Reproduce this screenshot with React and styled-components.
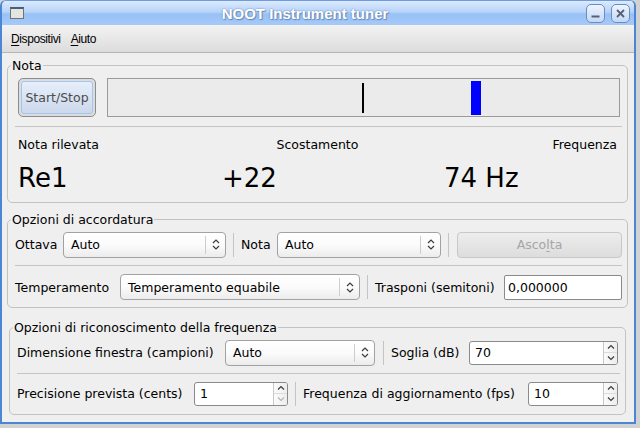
import styled, { createGlobalStyle } from "styled-components";

const GlobalStyle = createGlobalStyle`
  html, body { margin: 0; padding: 0; background: #d2d2d2; }
  body { font-family: "DejaVu Sans", "Noto Sans", sans-serif; font-size: 12.5px; color: #000; }
  * { box-sizing: border-box; }
`;

// finestra
const Window = styled.div`
  width: 636px;
  height: 424px;
  display: flex;
  flex-direction: column;
  background: #efefef;
  border: 2px solid #4a85d6;
  border-top: 1px solid #6d9de0;
  border-radius: 6px 6px 0 0;
  overflow: hidden;
`;

const TitleBar = styled.div`
  height: 24px;
  display: flex;
  align-items: center;
  padding: 0 4px 0 8px;
  background: linear-gradient(to bottom, #dceafd 0%, #b8d4fa 45%, #98c1f7 55%, #a6caf8 100%);
`;

const AppIcon = styled.div`
  width: 14px;
  height: 12px;
  border: 1px solid #6f7478;
  border-top: 2px solid #4c5d78;
  background: #e4e5df;
`;

const Title = styled.div`
  flex: 1;
  text-align: center;
  font-family: "Liberation Sans", Arial, sans-serif;
  font-weight: bold;
  font-size: 15px;
  color: #fff;
  text-shadow: 0 0 2px #5f7fae, 1px 1px 1px #6f8cb8;
`;

const WinButtons = styled.div`
  display: flex;
  gap: 6px;
`;

const WinButton = styled.div`
  width: 19px;
  height: 19px;
  border: 1px solid #6d8cbb;
  border-radius: 5px;
  background: linear-gradient(to bottom, #eef4fd, #c3d8f6);
  display: flex;
  align-items: center;
  justify-content: center;
`;

const MenuBar = styled.div`
  height: 28px;
  display: flex;
  align-items: center;
  gap: 10px;
  padding-left: 9px;
  background: linear-gradient(to bottom, #f3f3f3, #dcdcdc);
  border-bottom: 1px solid #b6b6b6;
  font-family: "Liberation Sans", Arial, sans-serif;
  font-size: 12px;
  letter-spacing: -0.4px;
`;

const Mnemonic = styled.span`
  text-decoration: underline;
  text-underline-offset: 2px;
`;

const Content = styled.div`
  display: flex;
  flex-direction: column;
  padding: 0 6px 0 5px;
`;

// gruppi
const Group = styled.fieldset`
  margin: ${(p) => p.$top}px ${(p) => p.$inset}px 0 ${(p) => p.$inset}px;
  padding: 0;
  border: 1px solid #c2c2c2;
  border-radius: 5px;
  min-width: 0;
`;

const Legend = styled.legend`
  margin-left: 3px;
  padding: 0 1px;
  line-height: 15px;
`;

const GroupBody = styled.div`
  display: flex;
  flex-direction: column;
  padding: ${(p) => p.$pad};
`;

const Row = styled.div`
  display: flex;
  align-items: center;
  height: ${(p) => p.$h || 26}px;
  margin-top: ${(p) => p.$mt || 0}px;
  padding-right: ${(p) => p.$pr || 0}px;
`;

const HLine = styled.div`
  height: 1px;
  background: #c4c4c4;
  margin-top: ${(p) => p.$mt}px;
`;

const VLine = styled.div`
  width: 1px;
  height: 24px;
  background: #c4c4c4;
  margin: 0 ${(p) => p.$r || 7}px 0 ${(p) => p.$l || 7}px;
`;

// larghezza fissa come nel layout Qt (testo + spazio)
const Label = styled.span`
  white-space: nowrap;
  flex: none;
  width: ${(p) => p.$w}px;
`;

// nota
const TopRow = styled.div`
  display: flex;
  height: 39px;
  gap: 11px;
  margin: 0 2px 0 3px;
`;

const StartButton = styled.div`
  width: 78px;
  border: 1px solid #8c8c8c;
  border-radius: 5px;
  padding: 2px;
  background: #dcdcdc;
  display: flex;
`;

const StartInner = styled.div`
  flex: 1;
  border: 1px solid #a3c6f0;
  border-radius: 3px;
  background: linear-gradient(to bottom, #e6eefa, #ccd9ec);
  display: flex;
  align-items: center;
  justify-content: center;
  color: #4c4c4c;
`;

const Meter = styled.div`
  flex: 1;
  position: relative;
  border: 1px solid #9a9a9a;
  background: #ebebeb;
`;

const Mark = styled.div`
  position: absolute;
  left: ${(p) => p.$x}px;
  top: ${(p) => p.$y}px;
  width: ${(p) => p.$w}px;
  height: ${(p) => p.$h}px;
  background: ${(p) => p.$c};
`;

const Readings = styled.div`
  display: grid;
  grid-template-columns: 1fr 1fr 1fr;
  line-height: 15px;
  margin: 9.5px 5px 0 3px;
`;

const Reading = styled.div`
  text-align: ${(p) => p.$align};
`;

const Values = styled.div`
  display: grid;
  grid-template-columns: 204px 222px 1fr;
  font-size: 26px;
  line-height: 30px;
  margin: 11.5px 0 0 3px;
`;

// controlli
const Combo = styled.div`
  width: ${(p) => p.$w}px;
  height: 26px;
  display: flex;
  align-items: center;
  border: 1px solid #a2a2a2;
  border-radius: 4px;
  background: linear-gradient(to bottom, #ffffff 0%, #fbfbfb 50%, #ececec 100%);
  padding-left: 7px;
`;

const ComboText = styled.span`
  flex: 1;
  white-space: nowrap;
`;

const ComboArrows = styled.div`
  width: 20px;
  height: 18px;
  border-left: 1px solid #cdcdcd;
  display: flex;
  align-items: center;
  justify-content: center;
`;

const Spin = styled.div`
  width: ${(p) => (p.$w ? `${p.$w}px` : "auto")};
  flex: ${(p) => (p.$w ? "none" : 1)};
  height: 24px;
  display: flex;
  border: 1px solid #8a8a8a;
  border-radius: 3px;
  background: #fff;
`;

const SpinText = styled.span`
  flex: 1;
  padding-left: 5px;
  line-height: 22px;
`;

const SpinButtons = styled.div`
  width: 14px;
  display: flex;
  flex-direction: column;
  border-left: 1px solid #c8c8c8;
  background: linear-gradient(to right, #fbfbfb, #ededed);
  border-radius: 0 2px 2px 0;
`;

const SpinHalf = styled.div`
  flex: 1;
  display: flex;
  align-items: center;
  justify-content: center;
  & + & { border-top: 1px solid #dcdcdc; }
`;

const TextInput = styled.div`
  flex: 1;
  height: 25px;
  border: 1px solid #8a8a8a;
  border-radius: 2px;
  background: #fff;
  padding-left: 3px;
  line-height: 23px;
`;

const ListenButton = styled.div`
  flex: 1;
  height: 26px;
  border: 1px solid #c8c8c8;
  border-radius: 4px;
  background: linear-gradient(to bottom, #ededed, #dddddd);
  color: #a6a6a6;
  display: flex;
  align-items: center;
  justify-content: center;
`;

const UpDown = () => (
  <svg width="8" height="13" viewBox="0 0 8 13">
    <path d="M1 5 L4 2 L7 5" fill="none" stroke="#3c3c3c" strokeWidth="1.2" />
    <path d="M1 8 L4 11 L7 8" fill="none" stroke="#3c3c3c" strokeWidth="1.2" />
  </svg>
);

const Chevron = ({ down, dim }) => (
  <svg width="8" height="6" viewBox="0 0 8 6">
    <path
      d={down ? "M1 1.5 L4 4.5 L7 1.5" : "M1 4.5 L4 1.5 L7 4.5"}
      fill="none"
      stroke={dim ? "#b4b4b4" : "#3c3c3c"}
      strokeWidth="1.2"
    />
  </svg>
);

const SelectBox = ({ w, value }) => (
  <Combo $w={w}>
    <ComboText>{value}</ComboText>
    <ComboArrows>
      <UpDown />
    </ComboArrows>
  </Combo>
);

const SpinBox = ({ w, value, atMin }) => (
  <Spin $w={w}>
    <SpinText>{value}</SpinText>
    <SpinButtons>
      <SpinHalf>
        <Chevron />
      </SpinHalf>
      <SpinHalf>
        <Chevron down dim={atMin} />
      </SpinHalf>
    </SpinButtons>
  </Spin>
);

const App = () => {
  return (
    <>
      <GlobalStyle />
      <Window>
        <TitleBar>
          <AppIcon />
          <Title>NOOT Instrument tuner</Title>
          <WinButtons>
            <WinButton>
              <svg width="11" height="11" viewBox="0 0 11 11">
                <path d="M1.5 8.5 H9.5" stroke="#556078" strokeWidth="2" />
              </svg>
            </WinButton>
            <WinButton>
              <svg width="11" height="11" viewBox="0 0 11 11">
                <path d="M2 2 L9 9 M9 2 L2 9" stroke="#556078" strokeWidth="1.8" />
              </svg>
            </WinButton>
          </WinButtons>
        </TitleBar>
        <MenuBar>
          <span>
            <Mnemonic>D</Mnemonic>ispositivi
          </span>
          <span>
            <Mnemonic>A</Mnemonic>iuto
          </span>
        </MenuBar>
        <Content>
          <Group $top={5} $inset={0}>
            <Legend>Nota</Legend>
            <GroupBody $pad="5px 5px 9px 7px">
              <TopRow>
                <StartButton>
                  <StartInner>Start/Stop</StartInner>
                </StartButton>
                <Meter>
                  <Mark $x={254} $y={4} $w={2} $h={30} $c="#000" />
                  <Mark $x={363} $y={2} $w={10} $h={34} $c="#0000ff" />
                </Meter>
              </TopRow>
              <HLine $mt={9} />
              <Readings>
                <Reading $align="left">Nota rilevata</Reading>
                <Reading $align="center">Scostamento</Reading>
                <Reading $align="right">Frequenza</Reading>
              </Readings>
              <Values>
                <span>Re1</span>
                <span>+22</span>
                <span>74 Hz</span>
              </Values>
            </GroupBody>
          </Group>

          <Group $top={9} $inset={0}>
            <Legend>Opzioni di accordatura</Legend>
            <GroupBody $pad="4.5px 5px 7px 7px">
              <Row>
                <Label $w={48}>Ottava</Label>
                <SelectBox w={163} value="Auto" />
                <VLine />
                <Label $w={36}>Nota</Label>
                <SelectBox w={164} value="Auto" />
                <VLine $r={8} />
                <ListenButton>
                  <span>
                    Asco<Mnemonic>l</Mnemonic>ta
                  </span>
                </ListenButton>
              </Row>
              <HLine $mt={7.5} />
              <Row $mt={8}>
                <Label $w={105}>Temperamento</Label>
                <SelectBox w={240} value="Temperamento equabile" />
                <VLine />
                <Label $w={129}>Trasponi (semitoni)</Label>
                <TextInput>0,000000</TextInput>
              </Row>
            </GroupBody>
          </Group>

          <Group $top={12} $inset={2}>
            <Legend>Opzioni di riconoscimento della frequenza</Legend>
            <GroupBody $pad="4.5px 5px 8px 7px">
              <Row $pr={2}>
                <Label $w={208}>Dimensione finestra (campioni)</Label>
                <SelectBox w={150} value="Auto" />
                <VLine $l={8} />
                <Label $w={78}>Soglia (dB)</Label>
                <SpinBox value="70" />
              </Row>
              <HLine $mt={7} />
              <Row $mt={8} $h={24} $pr={2}>
                <Label $w={177}>Precisione prevista (cents)</Label>
                <SpinBox w={94} value="1" atMin />
                <VLine />
                <Label $w={225}>Frequenza di aggiornamento (fps)</Label>
                <SpinBox value="10" />
              </Row>
            </GroupBody>
          </Group>
        </Content>
      </Window>
    </>
  );
};

export default App;
